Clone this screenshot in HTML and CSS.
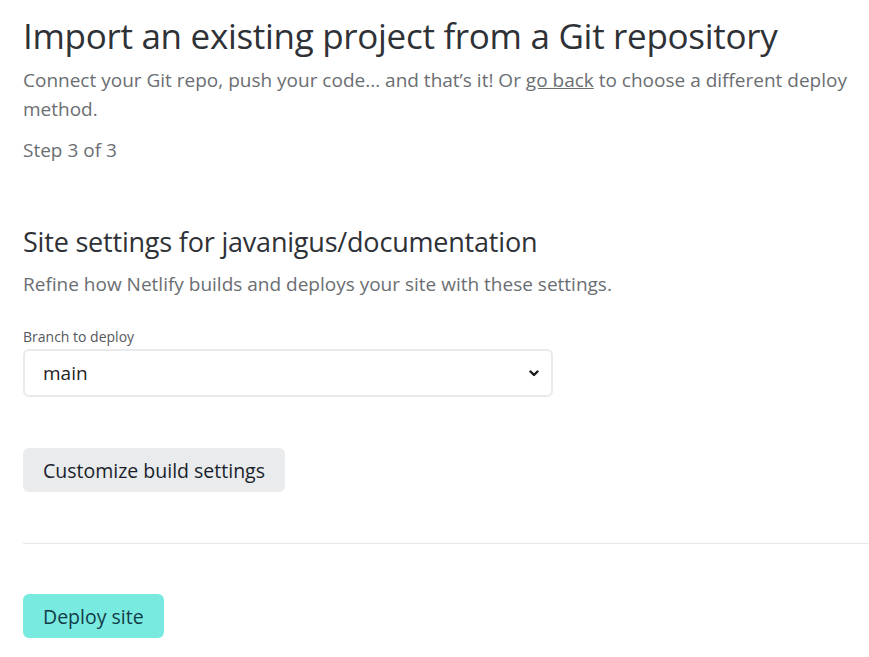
FILE: index.html
```html
<!DOCTYPE html>
<html lang="en">
<head>
<meta charset="utf-8">
<title>Import an existing project</title>
<link rel="stylesheet" href="styles.css">
</head>
<body>
<main class="page">
  <header class="intro">
    <h1 class="title">Import an existing project from a Git repository</h1>
    <p class="lead">Connect your Git repo, push your code... and that’s it! Or <a class="link" href="#">go back</a> to choose a different deploy method.</p>
    <p class="step">Step 3 of 3</p>
  </header>
  <section class="settings">
    <h2 class="subtitle">Site settings for javanigus/documentation</h2>
    <p class="desc">Refine how Netlify builds and deploys your site with these settings.</p>
    <div class="field">
      <label class="label">Branch to deploy</label>
      <div class="select">
        <span class="select-value">main</span>
        <svg class="chev" width="10" height="7" viewBox="0 0 10 7"><path d="M1.5 1.5 L5 5 L8.5 1.5" fill="none" stroke="#1a1a1a" stroke-width="2.4" stroke-linecap="round" stroke-linejoin="round"/></svg>
      </div>
    </div>
    <div class="actions">
      <button class="btn btn-secondary">Customize build settings</button>
    </div>
  </section>
  <hr class="divider">
  <div class="deploy">
    <button class="btn btn-primary">Deploy site</button>
  </div>
</main>
</body>
</html>
```
FILE: styles.css
```css
* { box-sizing: border-box; }
html, body { margin: 0; padding: 0; background: #fff; }
body {
  font-family: "Open Sans", "Noto Sans", sans-serif;
  color: #2e3136;
}
.page {
  padding: 14px 0 0 23px;
}
.title {
  margin: 0;
  font-size: 35px;
  font-weight: 400;
  line-height: 44px;
  color: #2e3136;
  letter-spacing: -0.3px;
}
.lead {
  margin: 8px 0 0;
  font-size: 19px;
  line-height: 29px;
  color: #6b6e72;
  max-width: 846px;
}
.link { color: #6b6e72; text-decoration: underline; }
.step {
  margin: 14px 0 0;
  font-size: 19px;
  line-height: 24px;
  color: #6b6e72;
}
.settings { margin-top: 62px; }
.subtitle {
  margin: 0;
  font-size: 27px;
  font-weight: 400;
  line-height: 36px;
  color: #2e3136;
  letter-spacing: -0.2px;
}
.desc {
  margin: 11px 0 0;
  font-size: 19px;
  line-height: 26px;
  color: #6b6e72;
}
.field { margin-top: 31px; }
.label {
  display: block;
  font-size: 14px;
  line-height: 18px;
  color: #55585c;
  font-weight: 500;
}
.select {
  margin-top: 3px;
  width: 530px;
  height: 48px;
  border: 2px solid #e8eaeb;
  border-radius: 6px;
  display: flex;
  align-items: center;
  justify-content: space-between;
  padding: 0 12px 0 18px;
}
.select-value { font-size: 19px; color: #1f2226; font-weight: 500; }
.chev { display: block; }
.actions { margin-top: 51px; }
.btn {
  font-family: inherit;
  font-size: 19.5px;
  border: 0;
  border-radius: 6px;
  cursor: pointer;
  padding: 0 20px;
  height: 44px;
  font-weight: 500;
}
.btn-secondary { background: #e9ebed; color: #1a1f2b; }
.btn-primary { background: #79eae0; color: #133c48; }
.divider {
  margin: 51px 0 0;
  border: 0;
  border-top: 1px solid #e8e8e8;
}
.deploy { margin-top: 50px; }
```
